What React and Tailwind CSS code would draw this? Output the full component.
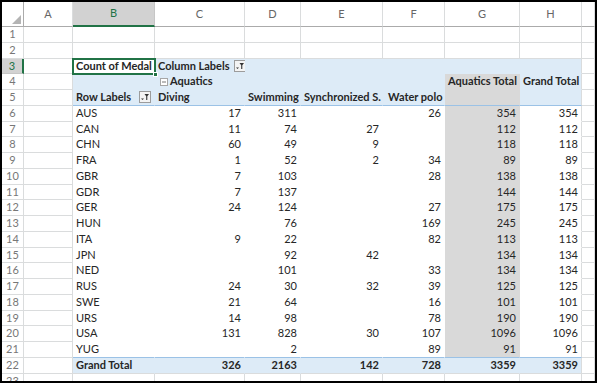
import React from 'react';

const W = ['w-[22px]', 'w-[49px]', 'w-[82px]', 'w-[90px]', 'w-[56px]', 'w-[82px]', 'w-[62px]', 'w-[75px]', 'w-[62px]', 'w-[13px]'];

const rows = [
  ['AUS', 17, 311, '', 26, 354],
  ['CAN', 11, 74, 27, '', 112],
  ['CHN', 60, 49, 9, '', 118],
  ['FRA', 1, 52, 2, 34, 89],
  ['GBR', 7, 103, '', 28, 138],
  ['GDR', 7, 137, '', '', 144],
  ['GER', 24, 124, '', 27, 175],
  ['HUN', '', 76, '', 169, 245],
  ['ITA', 9, 22, '', 82, 113],
  ['JPN', '', 92, 42, '', 134],
  ['NED', '', 101, '', 33, 134],
  ['RUS', 24, 30, 32, 39, 125],
  ['SWE', 21, 64, '', 16, 101],
  ['URS', 14, 98, '', 78, 190],
  ['USA', 131, 828, 30, 107, 1096],
  ['YUG', '', 2, '', 89, 91],
];

const GRID = 'border-r border-b border-[#dadcdd]';
const PIV = 'border-r border-b border-transparent';

function Cell({ w, className = '', children }) {
  return (
    <div className={`${w} h-full shrink-0 flex items-center whitespace-nowrap px-[3px] ${className}`}>
      {children}
    </div>
  );
}

function RowNum({ n, active }) {
  return (
    <div
      className={`w-[22px] h-full shrink-0 flex items-center justify-center text-[11px] ${
        active
          ? 'bg-[#d2d2d2] text-[#217346] border-r-2 border-r-[#217346] border-b border-b-[#c6c6c6]'
          : 'text-[#777] border-r border-b border-[#dadcdd]'
      }`}
    >
      {n}
    </div>
  );
}

function FilterBtn() {
  return (
    <svg width="12" height="12" viewBox="0 0 12 12" className="shrink-0">
      <rect x="0.5" y="0.5" width="11" height="11" fill="#f4f4f4" stroke="#9c9c9c" />
      <path d="M2 7.5h3l-1.5 1.6z" fill="#333" />
      <path d="M5.5 3h4.5l-1.7 2.2v3.8h-1.1v-3.8z" fill="#333" />
    </svg>
  );
}

function MinusBox() {
  return (
    <svg width="8" height="8" viewBox="0 0 8 8" className="shrink-0 mr-[2px]">
      <rect x="0.5" y="0.5" width="7" height="7" fill="#fff" stroke="#a6a6a6" />
      <path d="M2 4h4" stroke="#777" />
    </svg>
  );
}

function Row({ n, active, children }) {
  return (
    <div className="flex h-[15.75px]">
      <RowNum n={n} active={active} />
      {children}
    </div>
  );
}

export default function App() {
  const blue = 'bg-[#ddebf7]';
  const grey = 'bg-[#d9d9d9]';
  return (
    <div className="w-[597px] h-[383px] overflow-hidden border-2 border-black bg-white text-[11px] text-[#262626] font-['Lato','Open_Sans',sans-serif]">
      {/* column headers */}
      <div className="flex h-[25px] text-[11px] text-[#666]">
        <div className="w-[22px] h-full shrink-0 relative border-r border-b border-[#ababab]">
          <svg width="9" height="9" viewBox="0 0 9 9" className="absolute right-[2px] bottom-[2px]">
            <path d="M9 0V9H0z" fill="#b4b4b4" />
          </svg>
        </div>
        {['A', 'B', 'C', 'D', 'E', 'F', 'G', 'H', ''].map((c, i) => (
          <div
            key={i}
            className={`${W[i + 1]} h-full shrink-0 flex items-center justify-center ${
              c === 'B'
                ? 'bg-[#d2d2d2] text-[#217346] border-r border-r-[#c6c6c6] border-b-2 border-b-[#217346]'
                : 'border-r border-r-[#dadcdd] border-b border-b-[#ababab]'
            }`}
          >
            {c}
          </div>
        ))}
      </div>

      {[1, 2].map((n) => (
        <Row key={n} n={n}>
          {W.slice(1).map((w, i) => (
            <Cell key={i} w={w} className={GRID} />
          ))}
        </Row>
      ))}

      {/* row 3 */}
      <Row n={3} active>
        <Cell w={W[1]} className={GRID} />
        <div className={`${W[2]} h-full shrink-0 relative flex items-center px-[3px] font-bold whitespace-nowrap`}>
          Count of Medal
          <div className="absolute -left-[1px] -top-[1px] -right-[1px] -bottom-[1px] border-2 border-[#217346]" />
          <div className="absolute -right-[3px] -bottom-[3px] w-[5px] h-[5px] bg-[#217346] border border-white" />
        </div>
        <Cell w={W[3]} className={`${PIV} ${blue} font-bold gap-[4px]`}>
          Column Labels <FilterBtn />
        </Cell>
        {[4, 5, 6, 7, 8].map((i) => (
          <Cell key={i} w={W[i]} className={`${PIV} ${blue} ${i === 8 ? 'border-r-[#dadcdd]' : ''}`} />
        ))}
        <Cell w={W[9]} className={GRID} />
      </Row>

      {/* row 4 */}
      <Row n={4}>
        <Cell w={W[1]} className={GRID} />
        <Cell w={W[2]} className={`${PIV} ${blue}`} />
        <Cell w={W[3]} className={`${PIV} ${blue} font-bold pl-[5px]`}>
          <MinusBox />
          Aquatics
        </Cell>
        <Cell w={W[4]} className={`${PIV} ${blue}`} />
        <Cell w={W[5]} className={`${PIV} ${blue}`} />
        <Cell w={W[6]} className={`${PIV} ${blue}`} />
        <Cell w={W[7]} className={`${PIV} ${grey} font-bold`}>Aquatics Total</Cell>
        <Cell w={W[8]} className={`${PIV} ${blue} border-r-[#dadcdd] font-bold`}>Grand Total</Cell>
        <Cell w={W[9]} className={GRID} />
      </Row>

      {/* row 5 */}
      <Row n={5}>
        <Cell w={W[1]} className={GRID} />
        <Cell w={W[2]} className={`border-r border-r-transparent border-b border-b-[#9bc2e6] ${blue} font-bold justify-between`}>
          Row Labels <FilterBtn />
        </Cell>
        {['Diving', 'Swimming', 'Synchronized S.', 'Water polo'].map((t, i) => (
          <Cell key={t} w={W[i + 3]} className={`border-r border-r-transparent border-b border-b-[#9bc2e6] ${blue} font-bold ${i === 1 ? 'px-[1px]' : ''} ${i === 3 ? 'pl-[5px]' : ''}`}>
            {t}
          </Cell>
        ))}
        <Cell w={W[7]} className={`border-r border-r-transparent border-b border-b-[#9bc2e6] ${grey}`} />
        <Cell w={W[8]} className={`border-r border-r-[#dadcdd] border-b border-b-[#9bc2e6] ${blue}`} />
        <Cell w={W[9]} className={GRID} />
      </Row>

      {rows.map((r, ri) => {
        const last = ri === rows.length - 1;
        const bb = last ? 'border-b border-b-[#9bc2e6]' : 'border-b border-b-transparent';
        return (
          <Row key={r[0]} n={ri + 6}>
            <Cell w={W[1]} className={GRID} />
            <Cell w={W[2]} className={`border-r border-r-transparent ${bb}`}>{r[0]}</Cell>
            {[1, 2, 3, 4].map((k) => (
              <Cell key={k} w={W[k + 2]} className={`border-r border-r-transparent ${bb} justify-end`}>
                {r[k]}
              </Cell>
            ))}
            <Cell w={W[7]} className={`border-r border-r-transparent ${bb} ${grey} justify-end`}>{r[5]}</Cell>
            <Cell w={W[8]} className={`border-r border-r-[#dadcdd] ${bb} justify-end`}>{r[5]}</Cell>
            <Cell w={W[9]} className={GRID} />
          </Row>
        );
      })}

      {/* row 22 */}
      <Row n={22}>
        <Cell w={W[1]} className={GRID} />
        <Cell w={W[2]} className={`${blue} border-r border-r-transparent border-b border-b-[#dadcdd] font-bold`}>Grand Total</Cell>
        {[326, 2163, 142, 728, 3359].map((v, i) => (
          <Cell key={i} w={W[i + 3]} className={`${blue} border-r border-r-transparent border-b border-b-[#dadcdd] font-bold justify-end`}>
            {v}
          </Cell>
        ))}
        <Cell w={W[8]} className={`${blue} border-r border-b border-[#dadcdd] font-bold justify-end`}>3359</Cell>
        <Cell w={W[9]} className={GRID} />
      </Row>

      <Row n={23}>
        {W.slice(1).map((w, i) => (
          <Cell key={i} w={w} className={GRID} />
        ))}
      </Row>
    </div>
  );
}
